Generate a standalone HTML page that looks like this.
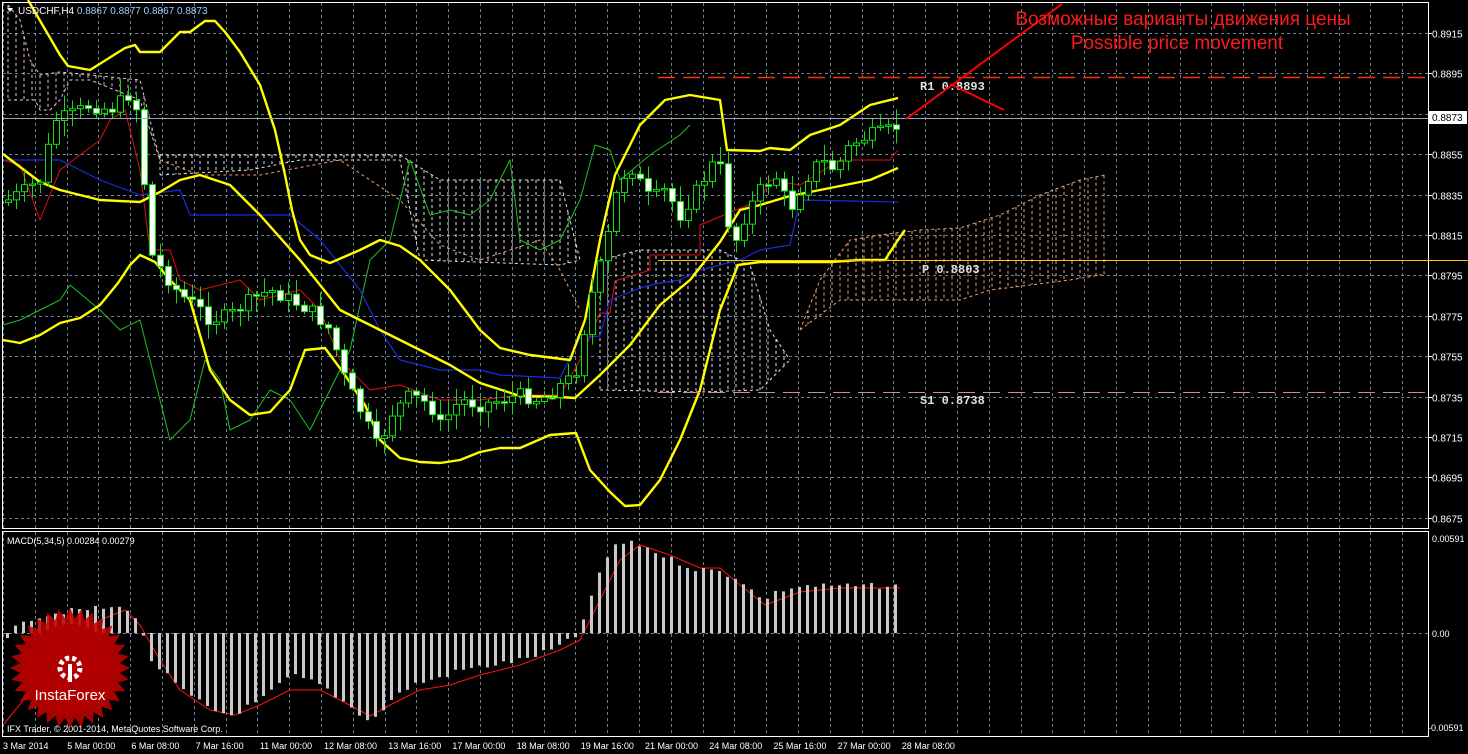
<!DOCTYPE html>
<html><head><meta charset="utf-8"><style>
html,body{margin:0;padding:0;background:#000;width:1468px;height:754px;overflow:hidden;font-family:"Liberation Sans",sans-serif}
svg{display:block}
</style></head><body>
<svg id="s" width="1468" height="754" xmlns="http://www.w3.org/2000/svg">
<rect width="1468" height="754" fill="#000"/>
<g id="grid" stroke="#6f7f90" stroke-dasharray="3,3" stroke-width="1"></g>
<g id="cloud"></g>
<g id="lines"></g>
<g id="candles"></g>
<g id="macd"></g>
<!-- borders -->
<rect x="2.5" y="2.5" width="1426" height="526" fill="none" stroke="#fff" stroke-width="1"/>
<rect x="2.5" y="531.5" width="1426" height="205" fill="none" stroke="#fff" stroke-width="1"/>
<!-- current price line -->
<line x1="3" y1="118.5" x2="1428" y2="118.5" stroke="#9aa4b0" stroke-width="1"/>
<!-- pivots -->
<line x1="658" y1="77.5" x2="1428" y2="77.5" stroke="#ff3000" stroke-width="1.5" stroke-dasharray="17,8"/>
<line x1="658" y1="260.5" x2="1468" y2="260.5" stroke="#ffc800" stroke-width="1"/>
<line x1="658" y1="392.5" x2="1428" y2="392.5" stroke="#d09080" stroke-width="1" stroke-dasharray="17,8"/>
<g fill="#e0e0e0" font-family="'Liberation Mono',monospace" font-size="12" font-weight="bold">
<text x="920" y="90">R1  0.8893</text>
<text x="922" y="273">P  0.8803</text>
<text x="920" y="404">S1  0.8738</text>
</g>
<!-- arrows -->
<line x1="906" y1="119" x2="1062" y2="4" stroke="#ff0000" stroke-width="2"/>
<line x1="950" y1="84" x2="1004" y2="110" stroke="#ff0000" stroke-width="2"/>
<g fill="#ff1a1a" font-size="19" text-anchor="middle">
<text x="1183" y="25">Возможные варианты движения цены</text>
<text x="1177" y="49">Possible price movement</text>
</g>
<!-- header -->
<path d="M7 8 L13 8 L10 12 Z" fill="#fff"/>
<text x="18" y="14" font-size="10" fill="#fff">USDCHF,H4 <tspan fill="#9fd0ff">0.8867 0.8877 0.8867 0.8873</tspan></text>
<text x="7" y="544" font-size="9" fill="#fff">MACD(5,34,5) 0.00284 0.00279</text>
<text x="7" y="732" font-size="9" fill="#fff">IFX Trader, © 2001-2014, MetaQuotes Software Corp.</text>
<!-- price axis -->
<g id="axis" font-size="10" fill="#fff"></g>
<rect x="1429" y="111" width="38" height="13" fill="#fff"/>
<text x="1432" y="121" font-size="10" fill="#000">0.8873</text>
<g font-size="9" fill="#fff">
<text x="1432" y="542">0.00591</text>
<text x="1432" y="637">0.00</text>
<text x="1428" y="731">-0.00591</text>
</g>
<g id="dates" font-size="9" fill="#fff"></g>
<!-- logo -->
<g transform="translate(70,668)">
<polygon id="star" fill="#c00000" opacity="0.88"/>
<circle r="44" fill="#b00000"/>
<circle cx="0" cy="0" r="10" fill="none" stroke="#fff" stroke-width="5" stroke-dasharray="4,3"/>
<rect x="-2" y="-4" width="4" height="18" fill="#fff"/>
<text x="0" y="32" font-size="15" fill="#fff" text-anchor="middle">InstaForex</text>
</g>
</svg>
<script>
var NS="http://www.w3.org/2000/svg";
function el(p,t,a){var e=document.createElementNS(NS,t);for(var k in a)e.setAttribute(k,a[k]);document.getElementById(p).appendChild(e);return e;}
// grid
for(var i=0;i<45;i++){var x=Math.round(3+i*31.8)+.5;if(x>1428)break;el('grid','line',{x1:x,y1:3,x2:x,y2:528});el('grid','line',{x1:x,y1:532,x2:x,y2:736});}
var yl=['0.8915','0.8895','0.8875','0.8855','0.8835','0.8815','0.8795','0.8775','0.8755','0.8735','0.8715','0.8695','0.8675'];
for(var j=0;j<13;j++){var y=Math.round(33+j*40.4)+.5;el('grid','line',{x1:3,y1:y,x2:1428,y2:y});
 var t=el('axis','text',{x:1432,y:y+4});t.textContent=yl[j];el('axis','line',{x1:1428,y1:y,x2:1432,y2:y,stroke:'#fff'});}
el('grid','line',{x1:3,y1:633.5,x2:1428,y2:633.5});
var dl=['3 Mar 2014','5 Mar 00:00','6 Mar 08:00','7 Mar 16:00','11 Mar 00:00','12 Mar 08:00','13 Mar 16:00','17 Mar 00:00','18 Mar 08:00','19 Mar 16:00','21 Mar 00:00','24 Mar 08:00','25 Mar 16:00','27 Mar 00:00','28 Mar 08:00'];
for(var k=0;k<dl.length;k++){var t=el('dates','text',{x:3+k*64.2,y:749});t.textContent=dl[k];}
function path(pts){return 'M'+pts.map(function(p){return p[0]+' '+p[1]}).join(' L');}
function pl(pts,c,w,dash){var a={d:path(pts),fill:'none',stroke:c,'stroke-width':w,'stroke-linejoin':'round'};if(dash)a['stroke-dasharray']=dash;return el('lines','path',a);}
// cloud (dashed vertical hatch)
function cloud(top,bot,col){for(var x=top[0][0];x<=top[top.length-1][0];x+=8){var a=interp(top,x),b=interp(bot,x);el('cloud','line',{x1:x,y1:a,x2:x,y2:b,stroke:col,'stroke-dasharray':'3,3','stroke-width':1});}
 var p1=el('cloud','path',{d:path(top),fill:'none',stroke:col,'stroke-dasharray':'3,3'});var p2=el('cloud','path',{d:path(bot),fill:'none',stroke:col,'stroke-dasharray':'3,3'});}
function interp(pts,x){for(var i=1;i<pts.length;i++){if(x<=pts[i][0]){var a=pts[i-1],b=pts[i];var t=(x-a[0])/(b[0]-a[0]||1);return a[1]+t*(b[1]-a[1]);}}return pts[pts.length-1][1];}
cloud([[8,5],[20,20],[30,60],[40,75],[60,72],[90,75],[140,80],[160,160]],[[8,100],[35,100],[40,110],[50,110],[60,100],[70,80],[90,80],[140,100],[160,160]],'#e8c8d0');
cloud([[160,155],[400,155],[440,180],[560,180],[580,260]],[[160,175],[250,170],[300,160],[400,160],[420,260],[560,265],[580,260]],'#e0e0e0');
cloud([[600,260],[640,250],[720,250],[750,265],[770,330],[790,360]],[[600,390],[700,392],[760,390],[790,360]],'#e0e0e0');
cloud([[800,330],[820,280],[850,240],[880,235],[920,230],[960,228],[1000,215],[1040,195],[1080,180],[1105,175]],[[800,330],[840,300],[900,300],[960,300],[990,290],[1030,285],[1070,280],[1100,275],[1105,275]],'#f0a070');
pl([[160,160],[200,175],[260,175],[340,160],[400,200],[440,245],[480,260],[540,240],[560,270],[580,310]],'#f0a070',1,'3,3');
// ichimoku lines
pl([[3,325],[20,320],[40,310],[60,300],[70,285],[100,310],[120,330],[140,320],[160,400],[170,440],[190,420],[205,360],[220,380],[230,430],[250,420],[270,390],[290,400],[310,430],[330,390],[350,350],[370,260],[390,240],[410,160],[430,215],[450,210],[470,215],[490,200],[510,160],[520,240],[540,250],[560,240],[580,200],[595,145],[610,150],[620,180],[650,155],[680,135],[690,125]],'#20c020',1);
pl([[3,160],[20,165],[40,220],[60,170],[80,155],[100,140],[110,120],[125,110],[140,170],[150,250],[170,250],[180,280],[200,290],[240,280],[260,300],[300,290],[320,310],[340,360],[370,390],[400,385],[440,400],[480,400],[520,395],[560,395],[580,360],[600,313],[610,313],[615,281],[650,270],[650,255],[700,255],[700,225],[760,200],[770,180],[800,185],[840,160],[870,160],[890,160],[898,150]],'#e01010',1);
pl([[3,160],[60,160],[100,180],[140,195],[180,190],[190,215],[290,215],[320,240],[360,290],[380,330],[400,360],[440,370],[480,370],[500,375],[560,378],[580,338],[600,336],[610,300],[640,288],[660,283],[680,280],[700,270],[740,260],[760,250],[790,245],[800,200],[898,202]],'#1a2ae0',1.2);
// bollinger
pl([[28,0],[60,55],[68,66],[90,70],[125,48],[135,45],[140,52],[160,52],[180,32],[190,32],[205,21],[215,21],[225,32],[240,52],[260,85],[275,130],[285,175],[292,210],[300,240],[310,255],[330,263],[360,250],[380,240],[400,246],[420,260],[450,290],[480,330],[500,348],[530,355],[570,360],[585,320],[600,240],[615,175],[640,125],[665,100],[690,95],[720,100],[727,150],[760,151],[770,148],[790,150],[810,135],[840,125],[870,105],[898,98]],'#ffff00',2.4);
pl([[3,154],[40,182],[60,190],[80,195],[100,200],[140,202],[160,192],[180,180],[200,175],[230,185],[260,215],[300,260],[340,310],[380,330],[420,350],[450,365],[480,383],[520,396],[560,397],[575,398],[600,375],[630,345],[660,305],[690,280],[720,242],[740,210],[760,205],[790,196],[830,188],[870,180],[898,168]],'#ffff00',2.4);
pl([[3,340],[20,343],[40,335],[60,323],[80,318],[100,305],[118,283],[130,265],[140,255],[155,262],[170,280],[190,300],[210,370],[230,400],[250,415],[270,412],[290,390],[305,350],[325,348],[345,375],[365,405],[380,440],[400,458],[420,462],[440,463],[460,460],[480,452],[500,448],[520,448],[550,435],[576,433],[590,470],[610,492],[625,506],[640,505],[660,480],[680,440],[700,390],[720,310],[738,265],[760,262],[790,262],[830,262],[860,260],[885,260],[898,240],[905,230]],'#ffff00',2.4);
// candles
var key=[[8,200],[25,190],[40,180],[55,120],[70,115],[90,105],[110,110],[128,95],[140,115],[148,250],[165,275],[180,295],[195,305],[210,320],[230,315],[250,300],[270,290],[290,300],[310,310],[330,330],[345,380],[365,420],[378,450],[390,415],[410,395],[430,405],[440,425],[460,400],[480,405],[500,400],[520,395],[540,400],[560,385],[575,375],[590,300],[605,250],[618,185],[630,165],[650,200],[665,190],[680,215],[700,185],[718,155],[732,250],[745,215],[760,190],[775,175],[790,210],[805,180],[820,160],[835,170],[850,145],[870,135],[885,132],[900,125]];
var seed=7;function rnd(){seed=(seed*9301+49297)%233280;return seed/233280;}
var prev=interp(key,4);
for(var x=8;x<=900;x+=8){var c=interp(key,x)+(rnd()-0.5)*14;var o=prev;var hi=Math.min(o,c)-2-rnd()*14;var lo=Math.max(o,c)+2+rnd()*14;
 el('candles','line',{x1:x+.5,y1:hi,x2:x+.5,y2:lo,stroke:'#10e010','stroke-width':1});
 var bull=c<o;var h=Math.max(Math.abs(c-o),1.5);
 el('candles','rect',{x:x-2.5,y:Math.min(o,c),width:6,height:h,fill:bull?'#000':'#fff',stroke:'#10e010','stroke-width':1});prev=c;}
// macd
var hk=[[6,640],[20,620],[60,612],[100,608],[130,608],[140,632],[150,660],[180,690],[210,710],[230,715],[260,700],[290,675],[320,685],[340,700],[370,722],[390,700],[410,685],[430,680],[460,670],[490,665],[520,660],[550,650],[575,637],[585,610],[600,570],[612,545],[625,543],[640,545],[660,555],[690,568],[720,572],[740,580],[760,600],[780,590],[800,586],[900,586]];
for(var x=6;x<=900;x+=8){var v=interp(hk,x)+(rnd()-0.5)*6;var y0=633;el('macd','rect',{x:x,y:Math.min(v,y0),width:3,height:Math.abs(v-y0)+0.1,fill:'#c8c8c8'});}
pl([[3,725],[40,680],[80,640],[100,620],[125,610],[140,625],[160,660],[180,690],[210,710],[235,715],[260,705],[290,690],[320,690],[340,700],[370,716],[390,705],[420,690],[450,685],[480,675],[520,665],[560,650],[580,640],[600,600],[620,560],[640,545],[670,555],[700,568],[720,568],[740,585],[765,605],[800,592],[840,588],[900,588]],'#ff1010',1);
// star
var pts=[];for(var i=0;i<64;i++){var r=i%2?50:60;var a=i*Math.PI/32;pts.push((r*Math.cos(a)).toFixed(1)+','+(r*Math.sin(a)).toFixed(1));}
document.getElementById('star').setAttribute('points',pts.join(' '));
</script>
</body></html>
